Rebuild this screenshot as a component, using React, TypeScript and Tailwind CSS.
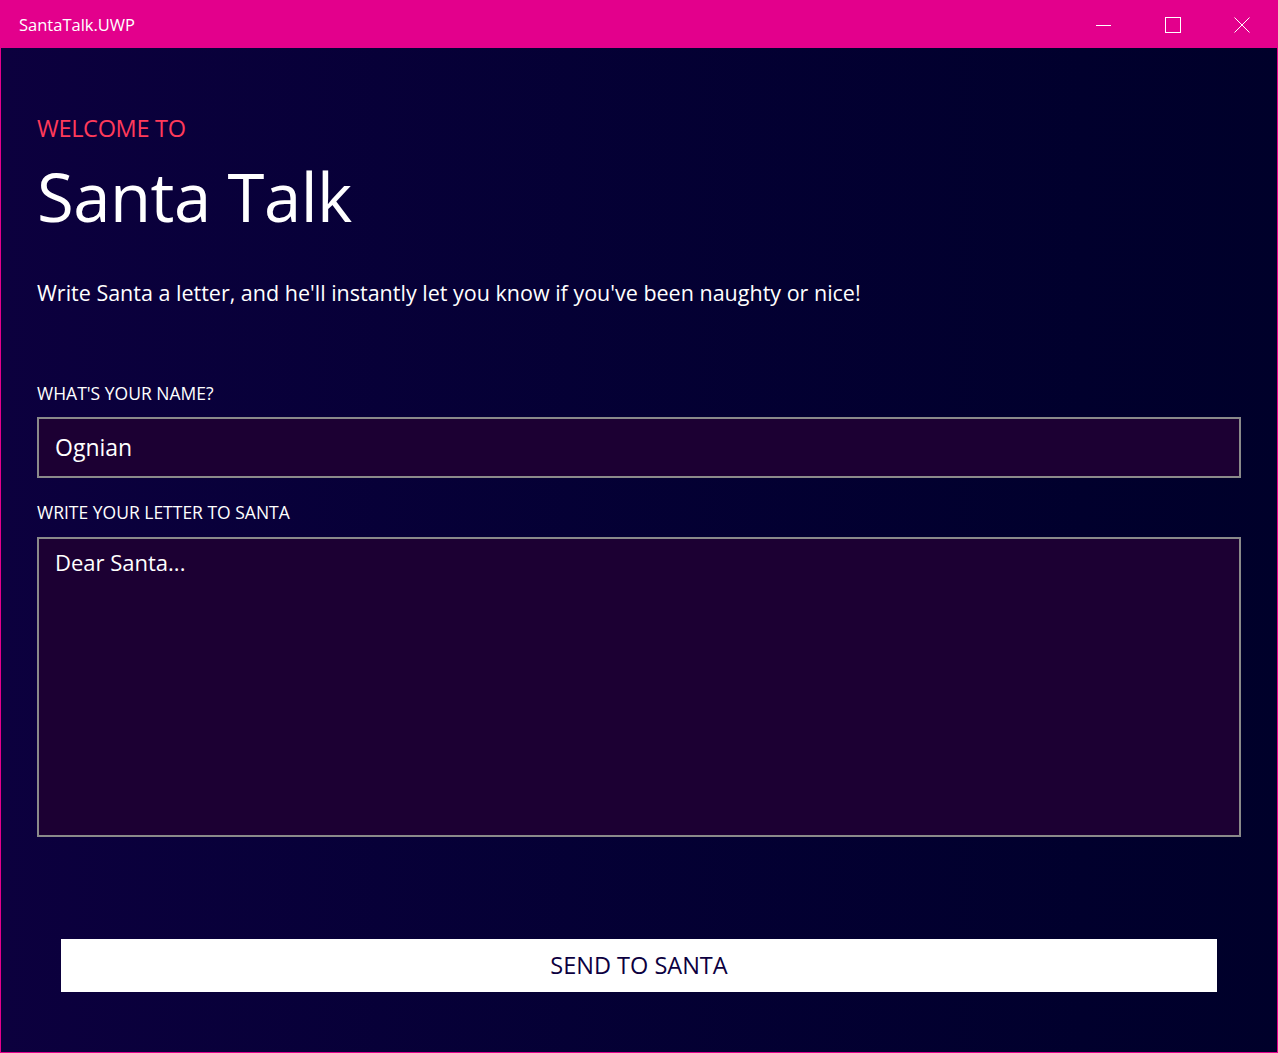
import React from "react";

export default function App() {
  const font = { fontFamily: '"Open Sans", "Noto Sans", sans-serif' } as React.CSSProperties;
  return (
    <div className="w-[1278px] h-[1053px] flex flex-col overflow-hidden" style={font}>
      <div className="h-[48px] bg-[#e3008c] flex items-center justify-between shrink-0">
        <span className="pl-[19px] pt-[2px] text-white text-[16.5px] leading-[22px]">SantaTalk.UWP</span>
        <div className="flex h-full mr-[2px] pt-[2px]">
          <div className="w-[69px] h-full flex items-center justify-center">
            <div className="w-[15px] h-px bg-white" />
          </div>
          <div className="w-[69px] h-full flex items-center justify-center">
            <div className="w-[16px] h-[16px] border border-white" />
          </div>
          <div className="w-[69px] h-full flex items-center justify-center">
            <svg width="16" height="16" viewBox="0 0 16 16">
              <path d="M0.5 0.5 L15.5 15.5 M15.5 0.5 L0.5 15.5" stroke="white" strokeWidth="1" />
            </svg>
          </div>
        </div>
      </div>
      <div className="flex-1 flex flex-col border-x border-b border-[#e3008c] bg-gradient-to-r from-[#0c003e] to-[#00002a] pl-[36px] pr-[36px]">
        <div className="mt-[64px] text-[#ff3a5a] text-[23.5px] leading-[32px] tracking-[-0.3px]">WELCOME TO</div>
        <div className="mt-[12px] text-white text-[67px] leading-[80px] tracking-[-0.5px]">Santa Talk</div>
        <div className="mt-[43px] text-white text-[21.5px] leading-[28px]">
          Write Santa a letter, and he'll instantly let you know if you've been naughty or nice!
        </div>
        <div className="mt-[75px] text-white text-[17.5px] leading-[22px]">WHAT'S YOUR NAME?</div>
        <div className="mt-[13px] h-[61px] border-2 border-[#8a8a8a] bg-[#1c0033] flex items-center pl-[16px] text-white text-[23px]">
          Ognian
        </div>
        <div className="mt-[23px] text-white text-[17.5px] leading-[22px]">WRITE YOUR LETTER TO SANTA</div>
        <div className="mt-[14px] h-[300px] border-2 border-[#8a8a8a] bg-[#1c0033] pl-[16px] pt-[8px] text-white text-[22px] leading-[30px]">
          Dear Santa...
        </div>
        <div className="mt-[102px] ml-[24px] mr-[24px] h-[53px] bg-white flex items-center justify-center text-[#0c0040] text-[23.5px]">
          SEND TO SANTA
        </div>
      </div>
    </div>
  );
}
